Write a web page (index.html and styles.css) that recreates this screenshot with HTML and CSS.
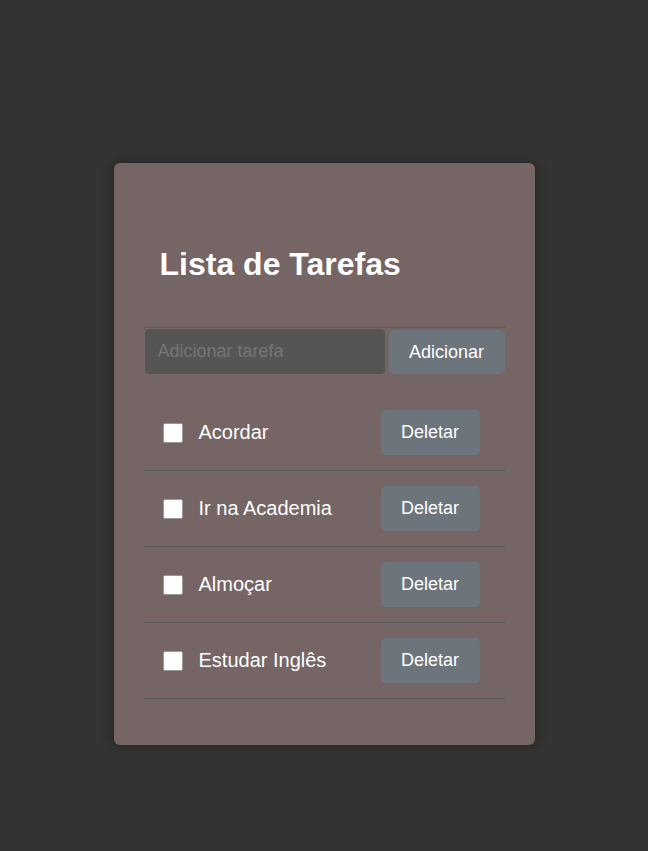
FILE: index.html
```html
<!DOCTYPE html>
<html lang="pt-BR">
<head>
<meta charset="utf-8">
<title>Lista de Tarefas</title>
<link rel="stylesheet" href="styles.css">
</head>
<body>
<main class="card">
  <header class="card-header">
    <h1 class="title">Lista de Tarefas</h1>
  </header>
  <form class="add-form" onsubmit="return false">
    <input class="add-input" type="text" placeholder="Adicionar tarefa">
    <button class="btn btn-add" type="submit">Adicionar</button>
  </form>
  <ul class="tasks">
    <li class="task"><input class="check" type="checkbox"><span class="task-text">Acordar</span><button class="btn btn-del">Deletar</button></li>
    <li class="task"><input class="check" type="checkbox"><span class="task-text">Ir na Academia</span><button class="btn btn-del">Deletar</button></li>
    <li class="task"><input class="check" type="checkbox"><span class="task-text">Almoçar</span><button class="btn btn-del">Deletar</button></li>
    <li class="task"><input class="check" type="checkbox"><span class="task-text">Estudar Inglês</span><button class="btn btn-del">Deletar</button></li>
  </ul>
</main>
</body>
</html>
```
FILE: styles.css
```css
* { box-sizing: border-box; }
html, body { height: 100%; }
body {
  margin: 0;
  background: #333333;
  font-family: "Liberation Sans", Arial, sans-serif;
  color: #ffffff;
  padding-top: 163px;
}
.card {
  width: 421px;
  margin: 0 auto;
  background: #756564;
  border-radius: 6px;
  padding: 30px 30px 46px;
  box-shadow: 0 0 12px rgba(0, 0, 0, 0.35);
}
.card-header {
  padding: 53px 16px 44px;
  border-bottom: 1px solid #5a5a5a;
}
.title {
  margin: 0;
  font-size: 32px;
  font-weight: bold;
  line-height: 37px;
}
.add-form {
  display: flex;
  align-items: center;
  gap: 4px;
  margin-top: 1px;
  padding-left: 1px;
}
.add-input {
  flex: 0 0 240px;
  min-width: 0;
  height: 45px;
  border: none;
  border-radius: 4px;
  background: #555555;
  color: #ffffff;
  font-family: inherit;
  font-size: 18px;
  padding: 0 13px;
  outline: none;
}
.add-input::placeholder { color: #757575; }
.btn {
  border: none;
  border-radius: 5px;
  background: #6c747c;
  color: #ffffff;
  font-family: inherit;
  font-size: 18px;
  padding: 0;
  cursor: pointer;
}
.btn-add { width: 116px; height: 44px; margin-top: 1px; }
.tasks {
  list-style: none;
  margin: 21px 0 0;
  padding: 0;
}
.task {
  display: flex;
  align-items: center;
  padding: 15px 25px 15px 19px;
  border-bottom: 1px solid #5a5a5a;
}
.check {
  appearance: none;
  -webkit-appearance: none;
  width: 20px;
  height: 20px;
  margin: 0;
  background: #ffffff;
  border: 1px solid #9a9a9a;
  border-radius: 2px;
}
.task-text {
  flex: 1;
  margin-left: 16px;
  font-size: 20px;
}
.btn-del { width: 99px; height: 45px; }
```
